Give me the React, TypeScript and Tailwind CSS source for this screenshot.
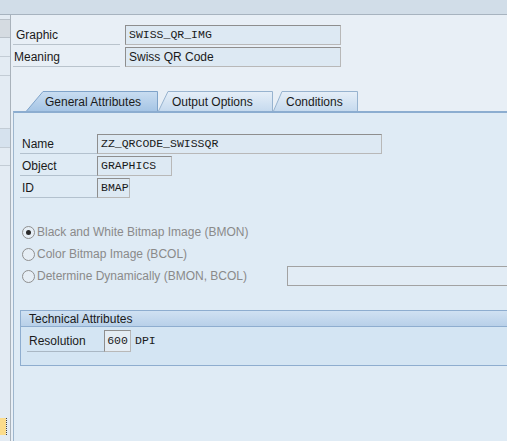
const Field = ({ value, w, mono = true }: { value: string; w: string; mono?: boolean }) => (
  <div
    className={`${w} h-full flex items-center px-[3px] bg-[#dde9f3] border border-t-[#8e8e8e] border-l-[#8e8e8e] border-r-[#b8b8b8] border-b-[#b8b8b8] text-[#1a1a1a] ${
      mono ? "font-['Liberation_Mono',monospace] text-[11.5px]" : "text-[12px]"
    }`}
  >
    {value}
  </div>
);

const Radio = ({ label, checked }: { label: string; checked?: boolean }) => (
  <div className="h-[22px] flex items-center">
    <div className="w-[13px] h-[13px] rounded-full border border-[#8f8f8f] bg-[#e6eef5] flex items-center justify-center">
      {checked && <div className="w-[5px] h-[5px] rounded-full bg-[#2a2a2a]" />}
    </div>
    <span className="ml-[2px] text-[#8a8a8a] text-[12px]">{label}</span>
  </div>
);

const Tab = ({
  id,
  label,
  w,
  slant,
  selected,
}: {
  id: string;
  label: string;
  w: number;
  slant: number;
  selected?: boolean;
}) => (
  <div className="relative h-[20px] flex items-center" style={{ width: w }}>
    <svg className="absolute inset-0" width={w} height={20} viewBox={`0 0 ${w} 20`}>
      <defs>
        <linearGradient id={id} x1="0" y1="0" x2="0" y2="1">
          <stop offset="0" stopColor={selected ? "#c9ddf1" : "#e6eff8"} />
          <stop offset="1" stopColor={selected ? "#a6c5e5" : "#c6daee"} />
        </linearGradient>
      </defs>
      <path
        d={`M0.5 20 L${slant} 0.5 L${w - 0.5} 0.5 L${w - 0.5} 20`}
        fill={`url(#${id})`}
        stroke={selected ? "#7fa3c9" : "#97b3cf"}
        strokeWidth="1"
      />
    </svg>
    <span
      className="relative pt-[2px] text-[12px] text-[#1a1a1a] leading-none"
      style={{ paddingLeft: slant + (selected ? 2 : 4) }}
    >
      {label}
    </span>
  </div>
);

export default function App() {
  return (
    <div className="w-[507px] h-[441px] overflow-hidden flex flex-col bg-[#e8eff6] font-['Liberation_Sans',Arial,sans-serif] text-[12px] text-[#1a1a1a]">
      {/* top bar */}
      <div className="h-[15px] shrink-0 bg-[#d1dde8] border-b border-[#a7b3bf]" />
      <div className="flex flex-1 min-h-0">
        {/* left strip */}
        <div className="w-[11px] shrink-0 flex flex-col bg-[#e3ebf3] border-r border-[#a9b2bb]">
          <div className="mt-[4px] h-[19px] bg-[#d5dbe1] border-y border-[#b9c1c9]" />
          <div className="h-[19px] border-b border-[#c3ccd5]" />
          <div className="h-[19px] border-b border-[#c3ccd5]" />
          <div className="h-[53px] border-b border-[#c3ccd5]" />
          <div className="h-[19px] bg-[#d6e2ee] border-b border-[#c3ccd5]" />
          <div className="h-[18px] border-b border-[#c3ccd5]" />
          <div className="flex-1" />
          <div className="h-[17px] mb-[6px] flex">
            <div className="w-[6px] bg-[#fbdc8c]" />
            <div className="w-px border-l border-dotted border-[#444]" />
          </div>
        </div>

        {/* main */}
        <div className="flex-1 flex flex-col min-w-0 pl-[1px]">
          <div className="pt-[10px] flex flex-col gap-[2px] pl-[1px]">
            <div className="flex h-[20px]">
              <div className="w-[107px] border-b border-[#b9c3cc] flex items-center pl-[3px]">Graphic</div>
              <div className="w-[5px]" />
              <Field value="SWISS_QR_IMG" w="w-[216px]" />
            </div>
            <div className="flex h-[20px]">
              <div className="w-[107px] border-b border-[#b9c3cc] flex items-center pl-[1px]">Meaning</div>
              <div className="w-[5px]" />
              <Field value="Swiss QR Code" w="w-[216px]" mono={false} />
            </div>
          </div>

          {/* tabs */}
          <div className="mt-[24px] flex pl-[14px]">
            <Tab id="tab-general" label="General Attributes" w={132} slant={17} selected />
            <Tab id="tab-output" label="Output Options" w={115} slant={10} />
            <Tab id="tab-conditions" label="Conditions" w={85} slant={9} />
          </div>

          {/* panel */}
          <div className="flex-1 ml-[1px] bg-[#dfebf5] border-l border-[#9eb6cd] border-t-2 border-t-[#8cadd0] flex flex-col pl-[6px]">
            <div className="pt-[21px] flex flex-col gap-[2px]">
              <div className="flex h-[20px]">
                <div className="w-[77px] border-b border-[#b3c1ce] flex items-center pl-[2px]">Name</div>
                <Field value="ZZ_QRCODE_SWISSQR" w="w-[285px]" />
              </div>
              <div className="flex h-[20px]">
                <div className="w-[77px] border-b border-[#b3c1ce] flex items-center pl-[2px]">Object</div>
                <Field value="GRAPHICS" w="w-[75px]" />
              </div>
              <div className="flex h-[20px]">
                <div className="w-[77px] border-b border-[#b3c1ce] flex items-center pl-[2px]">ID</div>
                <Field value="BMAP" w="w-[33px]" />
              </div>
            </div>

            <div className="mt-[23px] flex flex-col pl-[2px]">
              <Radio label="Black and White Bitmap Image (BMON)" checked />
              <Radio label="Color Bitmap Image (BCOL)" />
              <div className="flex items-center">
                <Radio label="Determine Dynamically (BMON, BCOL)" />
                <div className="ml-[40px] flex-1 h-[20px] bg-[#e2ecf5] border border-[#a2a2a2] border-r-0" />
              </div>
            </div>

            {/* technical attributes */}
            <div className="mt-[23px] border border-r-0 border-[#8eadcf] bg-[#d4e5f3]">
              <div className="h-[16px] flex items-center pl-[8px] bg-gradient-to-b from-[#d0e1f2] to-[#b8d0e9] border-b border-[#8eadcf]">
                Technical Attributes
              </div>
              <div className="pt-[3px] pb-[13px] pl-[6px] flex items-center">
                <div className="w-[77px] h-[21px] border-b border-[#a9b7c4] flex items-center pl-[2px]">Resolution</div>
                <div className="w-[27px] h-[22px] flex items-center justify-center bg-[#e4ecf3] border border-t-[#8e8e8e] border-l-[#8e8e8e] border-r-[#b8b8b8] border-b-[#b8b8b8] font-['Liberation_Mono',monospace] text-[11.5px]">
                  600
                </div>
                <span className="ml-[4px] font-['Liberation_Mono',monospace] text-[11.5px]">DPI</span>
              </div>
            </div>
          </div>
        </div>
      </div>
    </div>
  );
}
